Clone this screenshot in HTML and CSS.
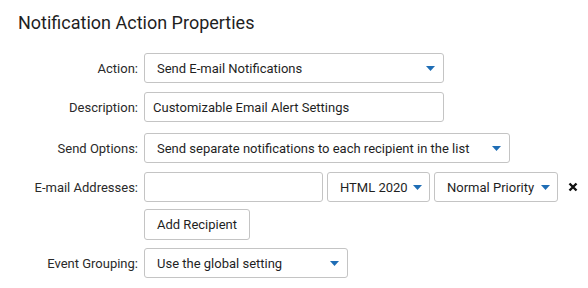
FILE: index.html
```html
<!DOCTYPE html>
<html lang="en">
<head>
    <meta charset="UTF-8">
    <title>Notification Action Properties</title>
    <link rel="stylesheet" href="styles.css">
</head>
<body>
    <div class="container">
        <h1>Notification Action Properties</h1>
        <div class="props-form">
            <div class="form-row">
                <label>Action:</label>
                <div class="select w-action">
                    <span>Send E-mail Notifications</span>
                    <svg class="caret" width="9" height="5" viewBox="0 0 9 5"><path d="M0 0h9L4.5 5z"/></svg>
                </div>
            </div>
            <div class="form-row row-desc">
                <label>Description:</label>
                <div class="input w-action">Customizable Email Alert Settings</div>
            </div>
            <div class="form-row">
                <label>Send Options:</label>
                <div class="select w-send">
                    <span>Send separate notifications to each recipient in the list</span>
                    <svg class="caret" width="9" height="5" viewBox="0 0 9 5"><path d="M0 0h9L4.5 5z"/></svg>
                </div>
            </div>
            <div class="form-row row-email">
                <label>E-mail Addresses:</label>
                <div class="controls">
                    <div class="input w-email"></div>
                    <div class="select select-tight w-format">
                        <span>HTML 2020</span>
                        <svg class="caret" width="9" height="5" viewBox="0 0 9 5"><path d="M0 0h9L4.5 5z"/></svg>
                    </div>
                    <div class="select select-tight w-priority">
                        <span>Normal Priority</span>
                        <svg class="caret" width="9" height="5" viewBox="0 0 9 5"><path d="M0 0h9L4.5 5z"/></svg>
                    </div>
                    <svg class="remove" width="10" height="10" viewBox="0 0 10 10"><path d="M1.5 1.5l7 7M8.5 1.5l-7 7"/></svg>
                </div>
            </div>
            <div class="form-row row-btn">
                <label></label>
                <button type="button" class="btn">Add Recipient</button>
            </div>
            <div class="form-row">
                <label>Event Grouping:</label>
                <div class="select w-group">
                    <span>Use the global setting</span>
                    <svg class="caret" width="9" height="5" viewBox="0 0 9 5"><path d="M0 0h9L4.5 5z"/></svg>
                </div>
            </div>
        </div>
    </div>
</body>
</html>
```

FILE: styles.css
```css
body {
    margin: 0;
    font-family: Roboto, "Liberation Sans", sans-serif;
    color: #222;
    background: #fff;
}
.container {
    padding: 12px 18px;
}
h1 {
    margin: 0 0 19px;
    font-size: 18px;
    font-weight: normal;
    line-height: 22px;
    color: #1f1f1f;
}
.form-row {
    display: flex;
    align-items: center;
    margin-bottom: 9px;
}
.row-desc {
    margin-bottom: 11px;
}
.row-email {
    margin-bottom: 7px;
}
.row-btn {
    margin-bottom: 8px;
}
.form-row label {
    flex-shrink: 0;
    width: 120px;
    margin-right: 6px;
    text-align: right;
    font-size: 13px;
    color: #2a2a2a;
}
.controls {
    display: flex;
    align-items: center;
    gap: 4px;
}
.select,
.input {
    box-sizing: border-box;
    flex-shrink: 0;
    height: 30px;
    border: 1px solid #c4c4c4;
    border-radius: 3px;
    font-size: 13px;
    color: #1f1f1f;
    background: #fff;
    display: flex;
    align-items: center;
    white-space: nowrap;
}
.select {
    justify-content: space-between;
    padding: 0 8px 0 12px;
}
.select-tight {
    padding-right: 7px;
}
.input {
    padding: 0 8px;
}
.caret {
    fill: #1e6db5;
    flex-shrink: 0;
}
.w-action { width: 300px; }
.w-send { width: 366px; }
.w-group { width: 204px; }
.w-email { width: 179px; }
.w-format { width: 103px; }
.w-priority { width: 124px; }
.remove {
    margin-left: 6px;
    stroke: #111;
    stroke-width: 2.4;
}
.btn {
    box-sizing: border-box;
    height: 31px;
    padding: 0 12px;
    border: 1px solid #c4c4c4;
    border-radius: 3px;
    background: #fff;
    font-family: inherit;
    font-size: 13px;
    color: #1f1f1f;
}
```
